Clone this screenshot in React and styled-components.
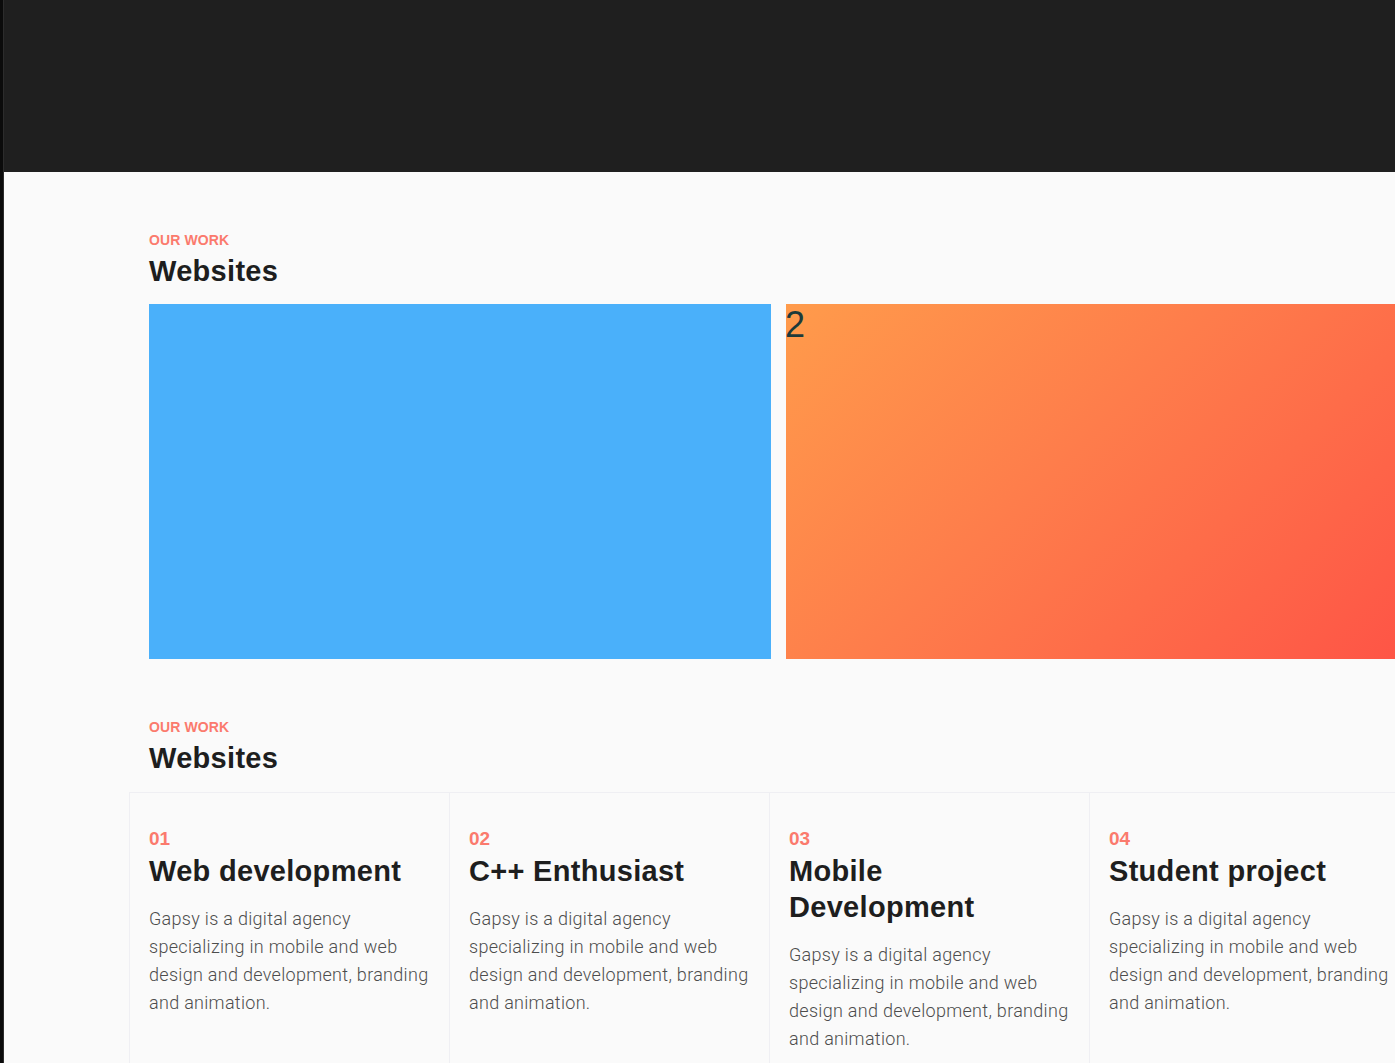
import styled, { createGlobalStyle } from "styled-components";

const GlobalStyle = createGlobalStyle`
  html, body {
    margin: 0;
    padding: 0;
    background: #fafafa;
    overflow-x: hidden;
  }
  body {
    font-family: "Liberation Sans", Arial, sans-serif;
    color: #1e1e1e;
  }
`;

const services = [
  { num: "01", title: "Web development" },
  { num: "02", title: "C++ Enthusiast" },
  { num: "03", title: "Mobile Development" },
  { num: "04", title: "Student project" },
];

const text =
  "Gapsy is a digital agency specializing in mobile and web design and development, branding and animation.";

function App() {
  return (
    <>
      <GlobalStyle />
      <Page>
        <Strip />
        <Main>
          <Header />
          <Section>
            <Label>OUR WORK</Label>
            <Title>Websites</Title>
            <Slider>
              <Slide $bg="#4ab0fa" />
              <Slide $bg="linear-gradient(135deg, #ff9b4b 0%, #fe7c4b 45%, #fe5446 100%)">
                <SlideNum>2</SlideNum>
              </Slide>
            </Slider>
          </Section>
          <Section>
            <Label>OUR WORK</Label>
            <Title>Websites</Title>
          </Section>
          <Cards>
            {services.map((s) => (
              <Card key={s.num}>
                <Num>{s.num}</Num>
                <CardTitle>{s.title}</CardTitle>
                <Desc>{text}</Desc>
              </Card>
            ))}
          </Cards>
        </Main>
      </Page>
    </>
  );
}
export default App;

const Page = styled.div`
  display: flex;
  min-height: 1063px;
`;

const Strip = styled.div`
  width: 3px;
  flex-shrink: 0;
  background: #0b0b0b;
  border-right: 1px solid #2c2c2c;
`;

const Main = styled.div`
  flex: 1;
  min-width: 0;
`;

const Header = styled.div`
  height: 172px;
  background: #1f1f1f;
`;

const Section = styled.section`
  padding: 59px 0 0 145px;
`;

const Label = styled.div`
  font-size: 14px;
  font-weight: 700;
  line-height: 18px;
  color: #fb7a6d;
  letter-spacing: 0.1px;
`;

const Title = styled.h2`
  margin: 5px 0 0;
  font-size: 29px;
  font-weight: 700;
  line-height: 34px;
  letter-spacing: 0.3px;
  color: #1e1e1e;
`;

const Slider = styled.div`
  display: flex;
  gap: 15px;
  margin-top: 16px;
  width: 2000px;
`;

const Slide = styled.div`
  width: 622px;
  height: 355px;
  flex-shrink: 0;
  background: ${(p) => p.$bg};
`;

const SlideNum = styled.div`
  font-size: 36px;
  line-height: 42px;
  color: #1d3a3a;
  margin-left: -1px;
`;

const Cards = styled.div`
  display: flex;
  margin: 17px 0 0 125px;
  width: 1280px;
`;

const Card = styled.div`
  width: 320px;
  flex-shrink: 0;
  box-sizing: border-box;
  border: 1px solid #efeff3;
  border-right: none;
  padding: 34px 20px 40px 19px;
  min-height: 280px;
`;

const Num = styled.div`
  font-size: 19px;
  font-weight: 700;
  line-height: 24px;
  color: #fb7a6d;
`;

const CardTitle = styled.h3`
  margin: 2px 0 0;
  font-size: 29px;
  font-weight: 700;
  line-height: 36px;
  letter-spacing: 0.3px;
  color: #1e1e1e;
`;

const Desc = styled.p`
  margin: 16px 0 0;
  font-family: Roboto, "Liberation Sans", sans-serif;
  font-size: 18px;
  font-weight: 300;
  line-height: 28px;
  letter-spacing: 0.3px;
  color: #4d4d4d;
`;
